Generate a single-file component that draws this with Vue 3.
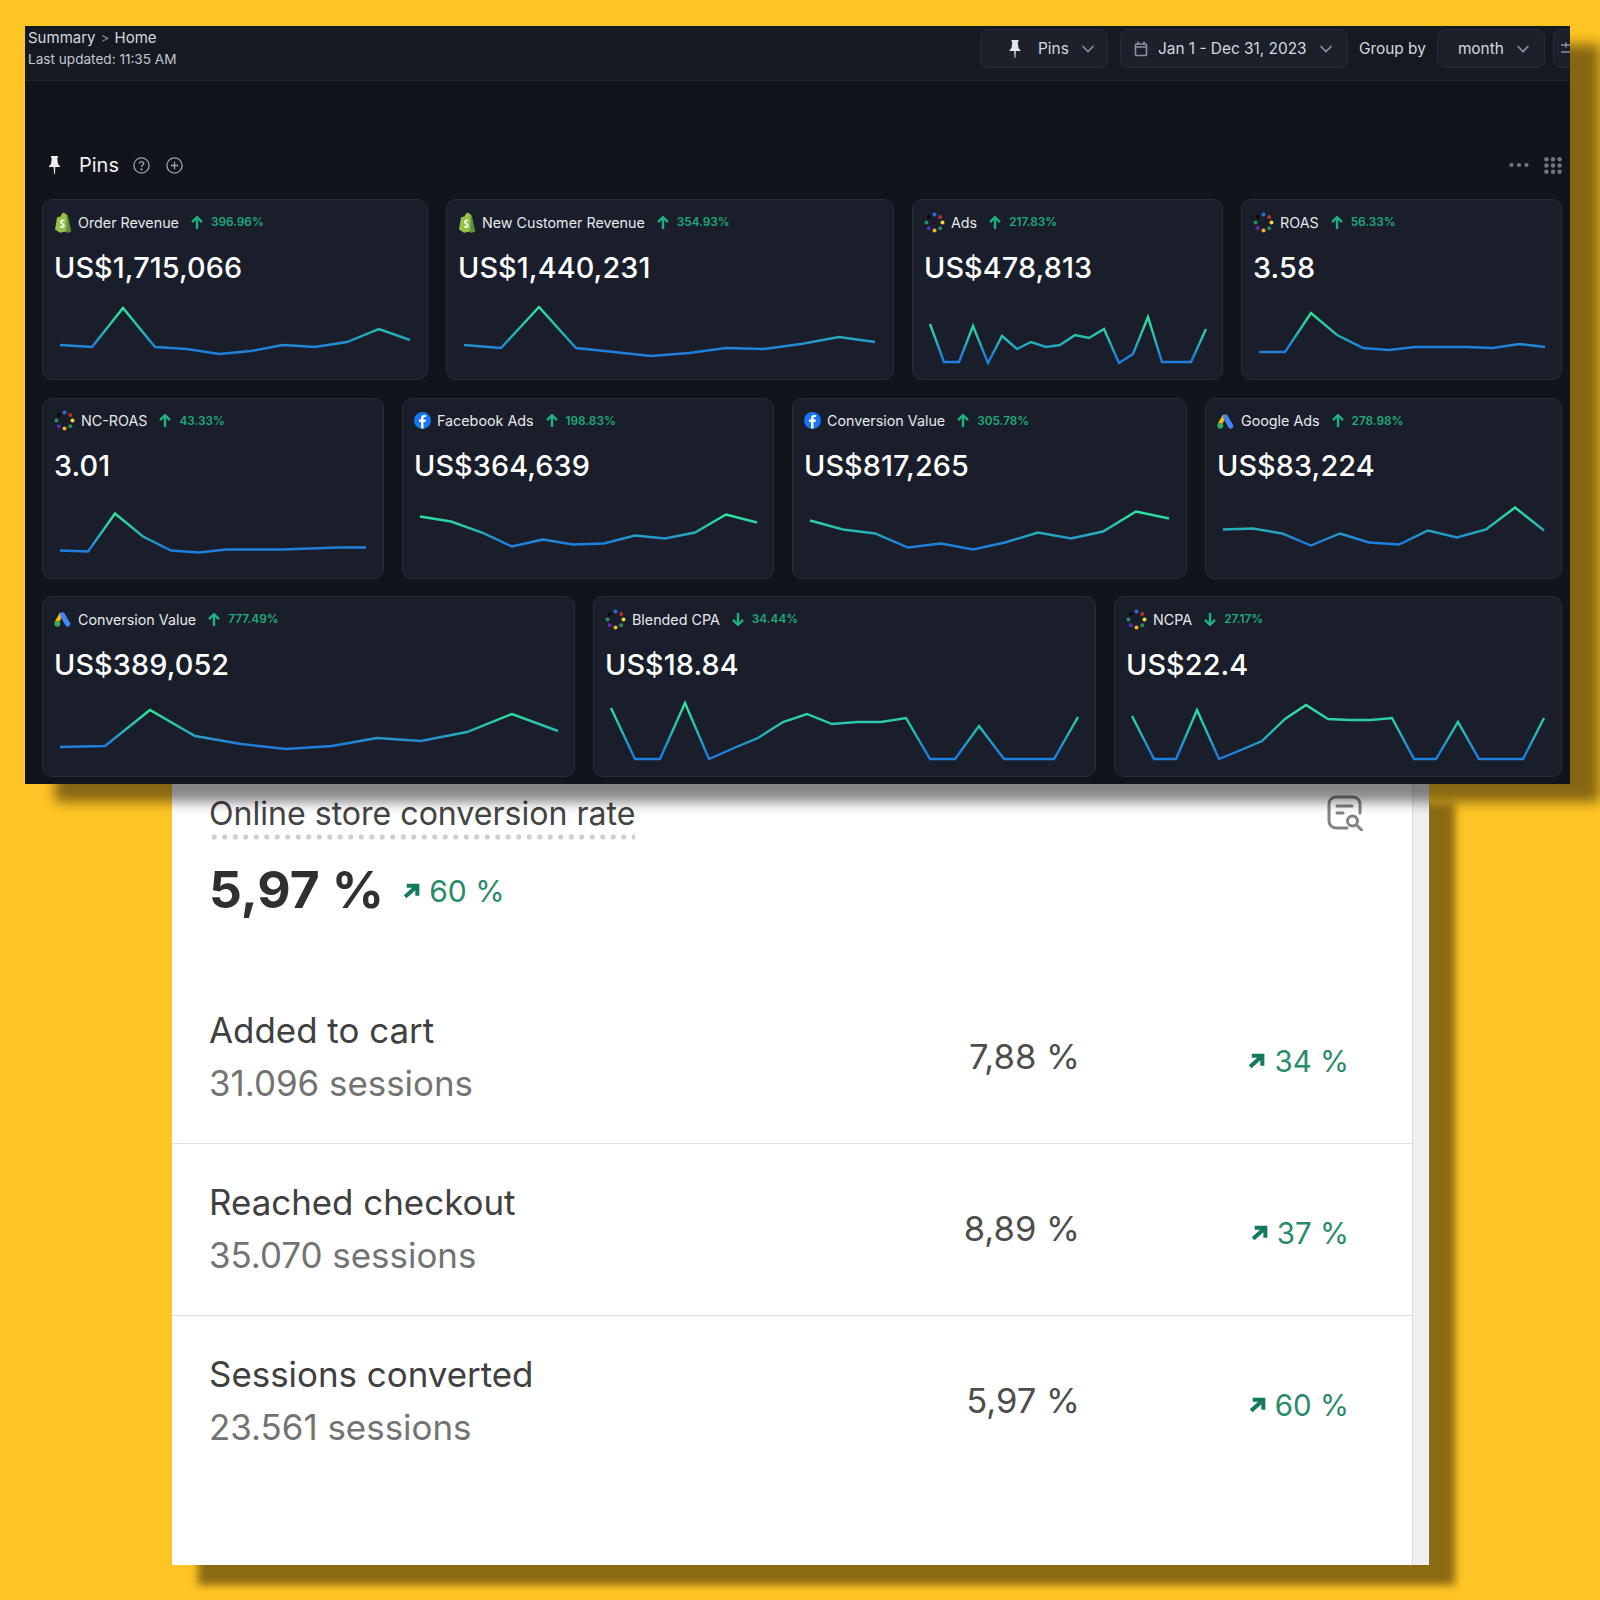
<template>
  <div class="stage">
    <section class="dash">
      <header class="topbar">
        <div class="crumbs">
          <div class="path">Summary <span class="sep">&gt;</span> Home</div>
          <div class="updated">Last updated: 11:35 AM</div>
        </div>
        <div class="tools">
          <button class="tool pins-btn">
            <svg width="14" height="20" viewBox="0 0 14 20"><path d="M3.5 1h7v1.5l-.8.6.8 6 2 2.2V12H1.500v-.7l2-2.200.8-6-.8-.6zM6.200 12h1.600l-.4 7h-.8z" fill="#e5e7eb" /></svg>
            <span>Pins</span>
            <svg class="chev" width="14" height="8" viewBox="0 0 14 8"><path d="M1.500 1l5.500 5.500L12.500 1" /></svg>
          </button>
          <button class="tool date-btn">
            <svg width="14" height="16" viewBox="0 0 14 16" fill="none" stroke="#8b93a1" stroke-width="1.600"><rect x="1.500" y="3" width="11" height="11.500" rx="1" /><path d="M1.500 6h11M4 .5v3M10 .5v3" /></svg>
            <span>Jan 1 - Dec 31, 2023</span>
            <svg class="chev" width="14" height="8" viewBox="0 0 14 8"><path d="M1.500 1l5.500 5.500L12.500 1" /></svg>
          </button>
          <span class="group-label">Group by</span>
          <button class="tool month-btn">
            <span>month</span>
            <svg class="chev" width="14" height="8" viewBox="0 0 14 8"><path d="M1.500 1l5.500 5.500L12.500 1" /></svg>
          </button>
          <button class="tool more-btn">
            <svg width="16" height="16" viewBox="0 0 16 16" fill="none" stroke="#8b93a1" stroke-width="1.500"><path d="M0 4h16M0 11h16M5 1.500v5M10 8.500v5" /></svg>
          </button>
        </div>
      </header>

      <main class="board">
        <div class="board-head">
          <svg class="head-pin" width="15" height="20" viewBox="0 0 14 20"><path d="M3.500 1h7v1.500l-.8.6.8 6 2 2.200V12H1.500v-.7l2-2.200.8-6-.8-.6zM6.200 12h1.600l-.4 7h-.8z" fill="#eef0f3" /></svg>
          <h2>Pins</h2>
          <svg class="help" width="17" height="17" viewBox="0 0 17 17" fill="none" stroke="#9aa3b2" stroke-width="1.300">
            <circle cx="8.500" cy="8.500" r="7.600" />
            <path d="M6.300 6.700c0-1.300 1-2.100 2.200-2.100s2.200.8 2.200 2c0 1.700-2.200 1.700-2.200 3.400" />
            <circle cx="8.500" cy="12.400" r=".5" />
          </svg>
          <svg class="add" width="17" height="17" viewBox="0 0 17 17" fill="none" stroke="#9aa3b2" stroke-width="1.300">
            <circle cx="8.500" cy="8.500" r="7.600" />
            <path d="M8.500 4.800v7.400M4.800 8.500h7.400" />
          </svg>
          <div class="head-right">
            <svg width="20" height="6" viewBox="0 0 20 6" fill="#6f7785">
              <circle cx="2.500" cy="3" r="2.100" /><circle cx="10" cy="3" r="2.100" /><circle cx="17.500" cy="3" r="2.100" />
            </svg>
            <svg width="18" height="17" viewBox="0 0 18 17" fill="#6f7785">
              <template v-for="r in [2.200, 8.500, 14.800]" :key="r">
                <circle v-for="c in [2.400, 9, 15.600]" :key="c" :cx="c" :cy="r" r="2.200" />
              </template>
            </svg>
          </div>
        </div>

        <div class="rows">
          <div v-for="(row, i) in rows" :key="i" class="row">
            <article v-for="card in row.cards" :key="card.label + card.x" class="card" :style="{ width: card.w + 'px' }">
              <div class="card-head">
                <svg v-if="card.src === 'shopify'" class="logo" width="18" height="21" viewBox="0 0 18 21">
                  <path d="M1 17.500 3 5.500 6.800 4.200C7.300 2 8.400.7 9.800.7c.9 0 1.500.6 1.900 1.500l1 .0 1 2.300L16 18.800 6 20.800z" fill="#95bf47" />
                  <path d="M12.700 2.200 14 4.500l3.300 15.300-5 1.200z" fill="#5e8e3e" />
                  <path d="M10.300 8.700c-2-.8-3.500 0-3.500 1.400 0 1.800 3.100 1.700 3.100 3.500 0 1.500-1.800 1.900-3.600 1" fill="none" stroke="#fff" stroke-width="1.700" />
                </svg>
                <svg v-else-if="card.src === 'multi'" class="logo" width="21" height="21" viewBox="0 0 21 21">
                  <circle v-for="d in dots" :key="d.c" :cx="d.x" :cy="d.y" r="2" :fill="d.c" />
                </svg>
                <svg v-else-if="card.src === 'facebook'" class="logo" width="17" height="17" viewBox="0 0 17 17">
                  <circle cx="8.500" cy="8.500" r="8.500" fill="#1877f2" />
                  <path d="M9.500 16.500v-6.600h2l.3-2.300H9.500V6.200c0-.7.3-1.100 1.200-1.100h1.200V3.100c-.5-.1-1.100-.1-1.700-.1-1.900 0-3.100 1.100-3.100 3v1.600h-2v2.300h2v6.600z" fill="#fff" />
                </svg>
                <svg v-else class="logo google" width="17" height="16" viewBox="0 0 17 16">
                  <path d="M6 1.500 1 10.200l3.500 2 5-8.700z" fill="#fbbc04" />
                  <path d="M6.300 2.600c1-1.700 3.200-1.700 4.100-.4l5.600 9.600c.7 1.400.2 2.800-1 3.500-1.300.7-2.700.3-3.500-.9L6 4.700z" fill="#4285f4" />
                  <circle cx="3.300" cy="12.700" r="3" fill="#34a853" />
                </svg>
                <span class="label">{{ card.label }}</span>
                <svg class="trend" width="12" height="13" viewBox="0 0 12 13" fill="none" stroke="#1fb27f" stroke-width="2.400">
                  <path v-if="card.down" d="M6 0v11.500M1 6.800l5 5 5-5" />
                  <path v-else d="M6 13V1.500M1 6.200l5-5 5 5" />
                </svg>
                <span class="delta">{{ card.delta }}</span>
              </div>
              <div class="value">{{ card.value }}</div>
              <svg class="spark" :width="card.w - 2" height="89" :viewBox="`${card.x + 1} ${row.top + 91} ${card.w - 2} 89`">
                <defs>
                  <linearGradient :id="`line-${card.x}-${i}`" x1="0" y1="0" x2="0" y2="1">
                    <stop offset="0" stop-color="#2fe69d" />
                    <stop offset=".5" stop-color="#29b8b4" />
                    <stop offset=".88" stop-color="#1f7fdc" />
                  </linearGradient>
                </defs>
                <polyline :points="card.pts" fill="none" :stroke="`url(#line-${card.x}-${i})`" stroke-width="2.400" />
              </svg>
            </article>
          </div>
        </div>
      </main>
    </section>

    <section class="report">
      <div class="report-body">
        <div class="report-head">
          <div>
            <div class="report-title">Online store conversion rate</div>
            <div class="headline">
              <span class="big">5,97 %</span>
              <span class="change raised">
                <svg width="17" height="16" viewBox="0 0 16 15" fill="none" stroke="#137a5b" stroke-width="3.800"><path d="M2 13 13 3M3.500 2.500h10V12" /></svg>
                60 %
              </span>
            </div>
          </div>
          <svg class="note-icon" width="36" height="36" viewBox="0 0 36 36" fill="none" stroke="#808285" stroke-width="3" stroke-linecap="round">
            <path d="M20 33H9a7 7 0 0 1-7-7V9a7 7 0 0 1 7-7h17a7 7 0 0 1 7 7v9" />
            <path d="M10 11h15M10 18h6" />
            <circle cx="25.500" cy="26" r="5" />
            <path d="M29.500 30l5 5" />
          </svg>
        </div>

        <div v-for="item in steps" :key="item.name" class="step">
          <div class="step-text">
            <div class="step-name">{{ item.name }}</div>
            <div class="step-sub">{{ item.sessions }} sessions</div>
          </div>
          <div class="step-rate">{{ item.rate }}</div>
          <div class="step-delta">
            <span class="change">
              <svg width="17" height="16" viewBox="0 0 16 15" fill="none" stroke="#137a5b" stroke-width="3.800"><path d="M2 13 13 3M3.500 2.500h10V12" /></svg>
              {{ item.delta }}
            </span>
          </div>
        </div>
      </div>
      <div class="track"></div>
    </section>
  </div>
</template>

<script setup>
const dots = [
  { x: 10.5, y: 2.6, c: '#2a6fd6' },
  { x: 16.2, y: 5, c: '#b3302c' },
  { x: 18.5, y: 10.6, c: '#f3d93f' },
  { x: 16.2, y: 16.2, c: '#2b8a5d' },
  { x: 10.5, y: 18.5, c: '#f0b429' },
  { x: 4.8, y: 16.2, c: '#5a2db5' },
  { x: 2.5, y: 10.6, c: '#2a8f60' },
  { x: 4.8, y: 5, c: '#0a0a0c' }
];

const rows = [
  {
    top: 199,
    cards: [
      { src: 'shopify', label: 'Order Revenue', delta: '396.96%', value: 'US$1,715,066', x: 42, w: 386, pts: '60,345 92,347 123,308 155,347 187,349 219,354 251,351 283,345 315,347 347,342 379,329 410,340' },
      { src: 'shopify', label: 'New Customer Revenue', delta: '354.93%', value: 'US$1,440,231', x: 446, w: 448, pts: '464,345 501,348 539,307 576,348 614,352 651,356 689,353 726,348 764,349 801,344 839,337 875,342' },
      { src: 'multi', label: 'Ads', delta: '217.83%', value: 'US$478,813', x: 912, w: 311, pts: '930,324 944,362 959,362 973,326 988,363 1002,336 1017,349 1031,342 1046,347 1060,345 1075,335 1089,338 1104,329 1119,363 1133,354 1148,317 1162,362 1177,362 1191,362 1206,329' },
      { src: 'multi', label: 'ROAS', delta: '56.33%', value: '3.58', x: 1241, w: 321, pts: '1259,352 1285,352 1311,313 1337,335 1363,348 1389,350 1415,347 1441,347 1467,347 1493,348 1519,344 1545,347' }
    ]
  },
  {
    top: 397.5,
    cards: [
      { src: 'multi', label: 'NC-ROAS', delta: '43.33%', value: '3.01', x: 42, w: 342, pts: '60,550 88,551 115,513 143,536 171,550 199,552 226,549 255,549 282,549 310,548 338,547 366,547' },
      { src: 'facebook', label: 'Facebook Ads', delta: '198.83%', value: 'US$364,639', x: 402, w: 372, pts: '420,516 451,521 482,532 512,546 543,539 573,544 604,543 635,535 665,538 695,532 726,514 757,522' },
      { src: 'facebook', label: 'Conversion Value', delta: '305.78%', value: 'US$817,265', x: 792, w: 395, pts: '810,520 843,529 875,533 908,547 941,543 973,549 1005,542 1038,532 1071,538 1103,531 1136,511 1169,518' },
      { src: 'google', label: 'Google Ads', delta: '278.98%', value: 'US$83,224', x: 1205, w: 357, pts: '1223,529 1253,528 1282,533 1311,545 1340,533 1369,542 1399,544 1428,530 1457,537 1486,529 1515,507 1544,530' }
    ]
  },
  {
    top: 596,
    cards: [
      { src: 'google', label: 'Conversion Value', delta: '777.49%', value: 'US$389,052', x: 42, w: 533, pts: '60,747 105,746 150,710 195,736 241,744 286,749 332,746 377,738 421,741 467,732 512,714 558,731' },
      { src: 'multi', label: 'Blended CPA', delta: '34.44%', down: true, value: 'US$18.84', x: 593, w: 503, pts: '611,708 635,759 660,759 685,703 709,759 734,748 758,738 783,722 807,714 832,724 857,722 881,722 906,718 930,759 955,759 979,726 1004,759 1029,759 1054,759 1078,717' },
      { src: 'multi', label: 'NCPA', delta: '27.17%', down: true, value: 'US$22.4', x: 1114, w: 448, pts: '1132,716 1154,759 1176,759 1197,710 1219,759 1241,750 1262,741 1285,719 1306,705 1328,719 1350,720 1371,720 1392,718 1414,759 1436,759 1458,722 1479,759 1501,759 1523,759 1544,718' }
    ]
  }
];

const steps = [
  { name: 'Added to cart', sessions: '31.096', rate: '7,88 %', delta: '34 %' },
  { name: 'Reached checkout', sessions: '35.070', rate: '8,89 %', delta: '37 %' },
  { name: 'Sessions converted', sessions: '23.561', rate: '5,97 %', delta: '60 %' }
];
</script>

<style scoped>
.stage {
  height: 1600px;
  padding-top: 26px;
  box-sizing: border-box;
  overflow: hidden;
  background: #ffc524;
  font-family: Inter, "Liberation Sans", sans-serif;
}

.dash {
  position: relative;
  z-index: 2;
  width: 1545px;
  height: 758px;
  margin-left: 25px;
  background: #11141b;
  color: #eef0f3;
  box-shadow: 30px 18px 12px rgba(0, 0, 0, 0.48);
}

.topbar {
  display: flex;
  justify-content: space-between;
  height: 55px;
  padding-left: 3px;
  box-sizing: border-box;
  border-bottom: 1px solid #1e2430;
  background: #151922;
}

.crumbs {
  padding-top: 1px;
}

.path {
  font-size: 15px;
  line-height: 22px;
  color: #d5d8de;
}

.sep {
  color: #8b93a1;
  font-size: 13px;
  margin: 0 1px;
}

.updated {
  font-size: 13.6px;
  line-height: 20px;
  color: #c3c7cf;
}

.tools {
  display: flex;
  align-items: center;
  gap: 12px;
  width: 590px;
  height: 41px;
  overflow: hidden;
  padding-top: 2px;
}

.tool {
  display: flex;
  align-items: center;
  flex: none;
  height: 39px;
  padding: 0;
  box-sizing: border-box;
  border: 1px solid #262c38;
  border-radius: 8px;
  background: #1b202b;
  color: #d5d8de;
  font-family: inherit;
  font-size: 15.4px;
}

.chev {
  fill: none;
  stroke: #8b93a1;
  stroke-width: 1.6;
}

.pins-btn {
  width: 128px;
  padding-left: 27px;
}

.pins-btn span {
  margin: 0 12px 0 16px;
}

.date-btn {
  width: 228px;
  padding-left: 13px;
}

.date-btn span {
  margin: 0 12px 0 10px;
  white-space: nowrap;
}

.group-label {
  flex: none;
  margin: 0 -1px 0 -1px;
  font-size: 15.4px;
  color: #d5d8de;
}

.month-btn {
  width: 108px;
  padding-left: 20px;
}

.month-btn span {
  margin-right: 12px;
}

.more-btn {
  width: 40px;
  padding-left: 7px;
  margin-left: -4px;
}

.board {
  padding: 69px 8px 0 17px;
}

.board-head {
  display: flex;
  align-items: center;
  height: 30px;
  margin-bottom: 19px;
}

.head-pin {
  margin-left: 5px;
}

.board-head h2 {
  margin: 0 0 0 17px;
  font-size: 20px;
  font-weight: 400;
  color: #eef0f3;
}

.help {
  margin-left: 14px;
}

.add {
  margin-left: 16px;
}

.head-right {
  display: flex;
  align-items: center;
  gap: 15px;
  margin-left: auto;
}

.rows {
  display: flex;
  flex-direction: column;
  gap: 17.5px;
}

.row {
  display: flex;
  gap: 18px;
}

.card {
  position: relative;
  flex: none;
  display: flex;
  flex-direction: column;
  height: 181px;
  box-sizing: border-box;
  border: 1px solid #262d3a;
  border-radius: 10px;
  background: #191e2a;
}

.card-head {
  display: flex;
  align-items: center;
  height: 24px;
  margin: 10px 0 0 11px;
}

.logo {
  flex: none;
  margin-right: 6px;
}

.google {
  margin-right: 7px;
}

.label {
  font-size: 14.3px;
  color: #e6e8ec;
  white-space: nowrap;
}

.trend {
  flex: none;
  margin: 0 8px 0 12px;
}

.delta {
  font-size: 11.8px;
  font-weight: 600;
  color: #1fa97a;
  white-space: nowrap;
}

.value {
  margin: 14.5px 0 0 11px;
  font-size: 28.8px;
  line-height: 38px;
  font-weight: 500;
  letter-spacing: 0.1px;
  color: #fff;
}

.spark {
  display: block;
  flex: none;
  margin-top: auto;
}

.report {
  display: flex;
  width: 1257px;
  height: 781px;
  margin-left: 172px;
  background: #fff;
  box-shadow: 26px 20px 8px rgba(0, 0, 0, 0.46);
}

.report-body {
  flex: 1;
  min-width: 0;
}

.track {
  flex: none;
  width: 17px;
  box-sizing: border-box;
  border-left: 1px solid #dcdcdc;
  background: #efefef;
}

.report-head {
  display: flex;
  align-items: flex-start;
  justify-content: space-between;
  height: 188px;
  padding: 11px 49px 0 37px;
  box-sizing: border-box;
}

.report-title {
  display: inline-block;
  padding-bottom: 7px;
  font-size: 32.1px;
  line-height: 38px;
  color: #444;
  background: radial-gradient(circle, #cfcfcf 2.4px, transparent 2.8px) left bottom / 10.5px 6px repeat-x;
}

.headline {
  display: flex;
  align-items: center;
  gap: 19px;
  height: 60px;
  margin-top: 19px;
}

.big {
  font-size: 51.5px;
  font-weight: 700;
  color: #303030;
}

.change {
  display: inline-flex;
  align-items: center;
  gap: 9px;
  font-size: 29.5px;
  color: #2a8a6c;
}

.raised {
  padding-top: 4px;
  font-size: 30px;
}

.step {
  display: flex;
  align-items: center;
  height: 172px;
  padding: 0 63px 0 37px;
  box-sizing: border-box;
  border-bottom: 1px solid #dfdfdf;
}

.step:last-child {
  border-bottom: none;
}

.step-text {
  flex: 1;
  padding-bottom: 3px;
}

.step-name {
  font-size: 34.9px;
  line-height: 52px;
  color: #404040;
}

.step-sub {
  margin-top: 1px;
  font-size: 34.9px;
  line-height: 52px;
  color: #737373;
}

.step-rate {
  padding-bottom: 4px;
  font-size: 34.6px;
  color: #4d4d4d;
}

.step-delta {
  display: flex;
  justify-content: flex-end;
  width: 269px;
  padding-top: 6px;
}
</style>
